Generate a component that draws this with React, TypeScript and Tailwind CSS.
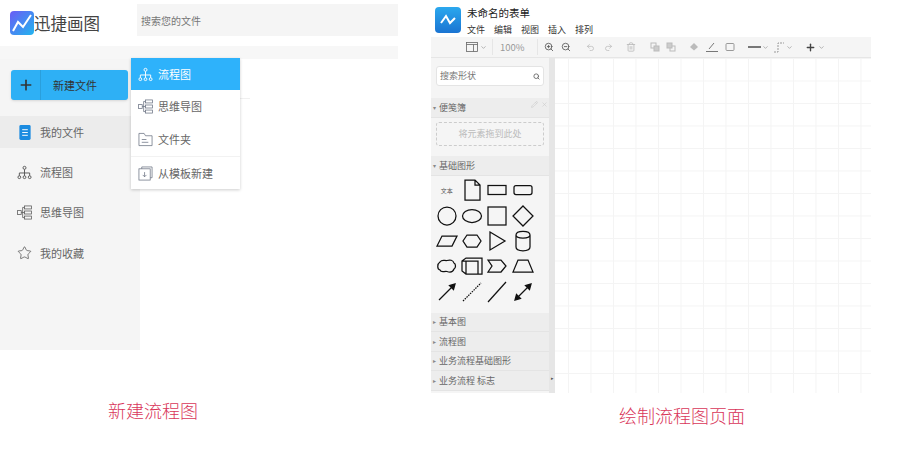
import { ChevronDown, Plus, Search, Star, ZoomIn, ZoomOut, Undo2, Redo2, Trash2, X, Pencil } from "lucide-react";

function FlowIcon({ className = "" }: { className?: string }) {
  return (
    <svg viewBox="0 0 16 16" className={className} fill="none" stroke="currentColor" strokeWidth="1">
      <circle cx="8" cy="3" r="1.6" />
      <path d="M8 4.6V8.5M2.5 11.5V8.5H13.5V11.5M8 8.5V11.5" />
      <circle cx="2.5" cy="13" r="1.5" />
      <circle cx="8" cy="13" r="1.5" />
      <circle cx="13.5" cy="13" r="1.5" />
    </svg>
  );
}

function MindIcon({ className = "" }: { className?: string }) {
  return (
    <svg viewBox="0 0 16 16" className={className} fill="none" stroke="currentColor" strokeWidth="0.8">
      <rect x="0.5" y="6" width="4" height="4" />
      <rect x="8" y="1" width="7.5" height="3.2" />
      <rect x="8" y="6.4" width="7.5" height="3.2" />
      <rect x="8" y="11.8" width="7.5" height="3.2" />
      <path d="M4.5 8H8M6 8V2.6H8M6 8V13.4H8" />
    </svg>
  );
}

function FolderIcon() {
  return (
    <svg viewBox="0 0 16 16" className="w-[15px] h-[15px] text-gray-500" fill="none" stroke="currentColor" strokeWidth="0.8">
      <path d="M1 1.5H6.5L8 4H15V14.5H1Z" />
      <path d="M4 8H9M4 11H11" />
    </svg>
  );
}

function TemplateIcon() {
  return (
    <svg viewBox="0 0 16 16" className="w-[15px] h-[15px] text-gray-500" fill="none" stroke="currentColor" strokeWidth="0.8">
      <path d="M4 3V1H15V12.5H13" />
      <rect x="1" y="3" width="12" height="12" />
      <path d="M7 6.5V11.5M5 9.5L7 11.5L9 9.5" />
    </svg>
  );
}

function SideItem({ icon, label, active }: { icon: React.ReactNode; label: string; active?: boolean }) {
  return (
    <div className={`h-[32px] flex items-center pl-[17px] gap-[8px] text-[11px] text-[#666] ${active ? "bg-[#ececec]" : ""}`}>
      <span className="w-[15px] flex justify-center">{icon}</span>
      {label}
    </div>
  );
}

function MenuItem({ icon, label, active, line }: { icon: React.ReactNode; label: string; active?: boolean; line?: boolean }) {
  return (
    <div
      className={`flex items-center pl-[7px] gap-[5px] text-[11px] ${
        active ? "h-[32px] bg-[#2eb2fb] text-white" : "h-[33px] text-[#666]"
      } ${line ? "border-t border-[#f2f2f2]" : ""}`}
    >
      {icon}
      {label}
    </div>
  );
}

function Shape({ children }: { children: React.ReactNode }) {
  return (
    <svg viewBox="0 0 24 24" className="w-[24px] h-[24px]" fill="none" stroke="#111" strokeWidth="1.25">
      {children}
    </svg>
  );
}

function SectionHead({ label, open }: { label: string; open?: boolean }) {
  return (
    <div className="h-[19.5px] shrink-0 flex items-center gap-[2px] pl-[2px] text-[9px] text-[#666] bg-[#ededed] border-b border-[#e4e4e4]">
      <span className="text-[6px] text-[#888] w-[4px]">{open ? "▾" : "▸"}</span>
      {label}
    </div>
  );
}

function ToolDivider() {
  return <span className="w-px h-[16px] bg-[#e6e6e6]" />;
}

function LeftPanel() {
  return (
    <div className="relative w-[398px] shrink-0">
      <div className="h-[46px] flex items-center">
        <svg viewBox="0 0 24 24" className="ml-[10px] w-[24px] h-[24px]">
          <defs>
            <linearGradient id="logoA" x1="0" y1="0" x2="1" y2="1">
              <stop offset="0" stopColor="#6a5cf5" />
              <stop offset="1" stopColor="#22b5ee" />
            </linearGradient>
          </defs>
          <rect width="24" height="24" rx="4" fill="url(#logoA)" />
          <path d="M3 20L8 11L13 16L21 4" fill="none" stroke="#fff" strokeWidth="2" />
        </svg>
        <span className="w-[66px] text-[16.5px] text-[#444] whitespace-nowrap">迅捷画图</span>
        <div className="ml-[37px] flex-1 h-[32px] bg-[#f5f5f5] flex items-center pl-[4px] text-[10px] text-[#777] -translate-y-[3px]">
          搜索您的文件
        </div>
      </div>
      <div className="h-[13px] bg-[#f7f7f7]" />
      <div className="flex">
        <div className="w-[140px] h-[291px] bg-[#f5f5f5] pt-[11px]">
          <div className="ml-[11px] w-[117px] h-[30px] rounded-[3px] bg-[#2eb0f5] flex items-center text-[#333] text-[11px] shadow-sm">
            <span className="w-[30px] h-full flex items-center justify-center border-r border-[#2a9fdc]">
              <Plus size={16} strokeWidth={2.5} />
            </span>
            <span className="ml-[12px]">新建文件</span>
          </div>
          <div className="mt-[16px] flex flex-col gap-[8.3px]">
            <SideItem active label="我的文件" icon={
              <svg viewBox="0 0 12 16" className="w-[12px] h-[15px]">
                <rect width="12" height="16" rx="1.5" fill="#1b8be0" />
                <path d="M3 5H9M3 8H9M3 11H9" stroke="#fff" strokeWidth="1" />
              </svg>
            } />
            <SideItem label="流程图" icon={<FlowIcon className="w-[15px] h-[15px] text-[#555]" />} />
            <SideItem label="思维导图" icon={<MindIcon className="w-[15px] h-[15px] text-[#555]" />} />
            <SideItem label="我的收藏" icon={<Star size={18} strokeWidth={1.1} className="text-[#444]" />} />
          </div>
        </div>
        <div className="pt-[39px]">
          <div className="w-[110px] border-t border-[#f0f0f0]" />
        </div>
      </div>

      {/* dropdown of the new file button */}
      <div className="absolute left-[131px] top-[58px] w-[109px] bg-white shadow-[0_1px_3px_rgba(0,0,0,0.2)]">
        <MenuItem active label="流程图" icon={<FlowIcon className="w-[15px] h-[15px]" />} />
        <MenuItem label="思维导图" icon={<MindIcon className="w-[15px] h-[15px] text-gray-500" />} />
        <MenuItem label="文件夹" icon={<FolderIcon />} />
        <MenuItem line label="从模板新建" icon={<TemplateIcon />} />
      </div>

      <div className="mt-[49px] ml-[108px] text-[18px] leading-[22px] text-[#d9365a] font-light">新建流程图</div>
    </div>
  );
}

function RightPanel() {
  return (
    <div className="ml-[33px] w-[440px] shrink-0">
      <div className="h-[37px] flex pl-[4px] pt-[7px]">
        <svg viewBox="0 0 26 26" className="w-[26px] h-[26px]">
          <defs>
            <linearGradient id="logoB" x1="0" y1="0" x2="0" y2="1">
              <stop offset="0" stopColor="#2ba8ee" />
              <stop offset="1" stopColor="#1a74d2" />
            </linearGradient>
          </defs>
          <rect width="26" height="26" rx="4" fill="url(#logoB)" />
          <path d="M6 16L11 9L15 16L20 11" fill="none" stroke="#fff" strokeWidth="2" />
        </svg>
        <div className="ml-[6px] -mt-[1px]">
          <div className="text-[10.5px] leading-[14px] text-[#222]">未命名的表单</div>
          <div className="mt-[3px] flex gap-[9px] text-[9px] leading-[13px] text-[#333]">
            <span>文件</span>
            <span>编辑</span>
            <span>视图</span>
            <span>插入</span>
            <span>排列</span>
          </div>
        </div>
      </div>

      <div className="h-[21px] bg-[#f5f5f5] border-b border-[#e6e6e6] flex items-center pl-[35px] text-[#888]">
        <svg viewBox="0 0 12 12" className="w-[12px] h-[12px]" fill="none" stroke="#666" strokeWidth="0.8">
          <rect x="0.5" y="1.5" width="11" height="9" />
          <path d="M0.5 3.5H11.5M7.5 3.5V10.5" />
        </svg>
        <ChevronDown size={7} className="ml-[2px] mr-[5px]" />
        <ToolDivider />
        <span className="ml-[7px] mr-[9px] text-[9.5px] w-[28px] text-[#999]">100%</span>
        <ToolDivider />
        <ZoomIn size={10} strokeWidth={2} className="ml-[6px] text-[#555]" />
        <ZoomOut size={10} strokeWidth={2} className="ml-[7px] text-[#555]" />
        <Undo2 size={9} className="ml-[15px] text-[#bbb]" />
        <Redo2 size={9} className="ml-[9px] text-[#bbb]" />
        <span className="ml-[5px]"><ToolDivider /></span>
        <Trash2 size={10} className="ml-[8px] text-[#bbb]" />
        <span className="ml-[6px]"><ToolDivider /></span>
        <svg viewBox="0 0 10 10" className="ml-[8px] w-[10px] h-[10px]" fill="none" stroke="#bbb">
          <rect x="1" y="1" width="5" height="5" />
          <rect x="4" y="4" width="5" height="5" fill="#ccc" />
        </svg>
        <svg viewBox="0 0 10 10" className="ml-[6px] w-[10px] h-[10px]" fill="none" stroke="#bbb">
          <rect x="4" y="4" width="5" height="5" />
          <rect x="1" y="1" width="5" height="5" fill="#ccc" />
        </svg>
        <span className="ml-[9px]"><ToolDivider /></span>
        <svg viewBox="0 0 10 10" className="ml-[4px] w-[10px] h-[10px]" fill="#bbb">
          <path d="M5 1L9 5L5 8.5L1 5Z" />
        </svg>
        <svg viewBox="0 0 12 10" className="ml-[7px] w-[12px] h-[10px]" fill="none" stroke="#777">
          <path d="M3 7L8 1M0 9.5H12" />
        </svg>
        <svg viewBox="0 0 10 10" className="ml-[7px] w-[10px] h-[10px]" fill="none" stroke="#999">
          <rect x="1" y="1.5" width="8" height="7" rx="1" />
        </svg>
        <span className="ml-[9px]"><ToolDivider /></span>
        <span className="ml-[4px] w-[13px] h-[2px] bg-[#777]" />
        <ChevronDown size={7} className="ml-[1px]" />
        <svg viewBox="0 0 12 12" className="ml-[4px] w-[12px] h-[12px]" fill="none" stroke="#999">
          <path d="M1 11H5V2H11" strokeDasharray="2 1" />
        </svg>
        <ChevronDown size={7} className="ml-[1px]" />
        <span className="ml-[8px]"><ToolDivider /></span>
        <Plus size={11} strokeWidth={3} className="ml-[4px] text-[#444]" />
        <ChevronDown size={7} className="ml-[2px]" />
      </div>

      <div className="flex h-[335px]">
        <div className="w-[124px] shrink-0 flex">
          <div className="w-[118px] bg-[#f5f5f5] flex flex-col">
            <div className="px-[5px] pt-[8px] h-[40px]">
              <div className="h-[20px] bg-white rounded-[3px] border border-[#e4e4e4] flex items-center justify-between px-[3px] text-[9px] text-[#777]">
                搜索形状
                <Search size={7} strokeWidth={3} className="text-[#666]" />
              </div>
            </div>
            <div className="relative">
              <SectionHead open label="便笺簿" />
              <div className="absolute right-[1px] top-[3px] flex gap-[3px] text-[#ccc]">
                <Pencil size={7} />
                <X size={7} />
              </div>
            </div>
            <div className="h-[38.5px] px-[5px] pt-[4px]">
              <div className="h-[24px] border border-dashed border-[#ccc] rounded-[3px] flex items-center justify-center text-[9px] text-[#bbb]">
                将元素拖到此处
              </div>
            </div>
            <SectionHead open label="基础图形" />
            <div className="h-[137px] shrink-0 pl-[3px] pt-[2px] grid grid-cols-[repeat(4,25.3px)] auto-rows-[25.4px] justify-items-center items-center">
              <span className="text-[6px] text-[#555]">文本</span>
              <Shape><path d="M5 2H15L20 7V22H5ZM15 2V7H20" /></Shape>
              <Shape><rect x="3" y="7.5" width="18" height="9" /></Shape>
              <Shape><rect x="3" y="7.5" width="18" height="9" rx="2" /></Shape>
              <Shape><circle cx="12" cy="12" r="9" /></Shape>
              <Shape><ellipse cx="12" cy="12" rx="9.5" ry="6.5" /></Shape>
              <Shape><rect x="3" y="3" width="18" height="18" /></Shape>
              <Shape><path d="M12 2L22 12L12 22L2 12Z" /></Shape>
              <Shape><path d="M7 7H22L17 17H2Z" /></Shape>
              <Shape><path d="M7 6H17L21 12L17 18H7L3 12Z" /></Shape>
              <Shape><path d="M5 3L20 12L5 21Z" /></Shape>
              <Shape><path d="M5 6V18C5 23 19 23 19 18V6C19 1 5 1 5 6C5 10 19 10 19 6" /></Shape>
              <Shape><path d="M5 8C7 5 10 7 12 6.5C15 5.5 18 6 19 9C21 10 21 14 19 15C18 18 15 18.5 12 17.5C9 17 6 19 5 16C2 15 2 10 5 8Z" /></Shape>
              <Shape><path d="M2 7L6 4H22V20H6L2 17ZM2 7H18V20M6 7V20" /></Shape>
              <Shape><path d="M3 6H16L21 12L16 18H3L7 12Z" /></Shape>
              <Shape><path d="M7 6H17L22 18H2Z" /></Shape>
              <Shape><path d="M4 20L19 5" /><path d="M20 4L18.5 9.5L14.5 5.5Z" fill="#111" /></Shape>
              <Shape><path d="M3 21L21 3" strokeDasharray="1.5 1" /></Shape>
              <Shape><path d="M3 22L21 2" /></Shape>
              <Shape><path d="M5 19L19 5" /><path d="M20 4L18.5 9.5L14.5 5.5Z" fill="#111" /><path d="M4 20L5.5 14.5L9.5 18.5Z" fill="#111" /></Shape>
            </div>
            <SectionHead label="基本图" />
            <SectionHead label="流程图" />
            <SectionHead label="业务流程基础图形" />
            <SectionHead label="业务流程 标志" />
          </div>
          <div className="w-[6px] bg-[#e6e6e6] flex items-end pb-[12px] justify-center text-[5px] text-[#555]">▸</div>
        </div>
        <div className="flex-1 bg-white bg-[linear-gradient(#f4f4f4_1px,transparent_1px),linear-gradient(90deg,#f4f4f4_1px,transparent_1px)] bg-[size:22.5px_22.5px] bg-[position:13px_0]" />
      </div>

      <div className="mt-[11px] ml-[188px] text-[18px] leading-[22px] text-[#d9365a] font-light">绘制流程图页面</div>
    </div>
  );
}

export default function App() {
  return (
    <div className="flex w-[920px] h-[467px] overflow-hidden bg-white font-['Noto_Sans_CJK_SC',sans-serif]">
      <LeftPanel />
      <RightPanel />
    </div>
  );
}
